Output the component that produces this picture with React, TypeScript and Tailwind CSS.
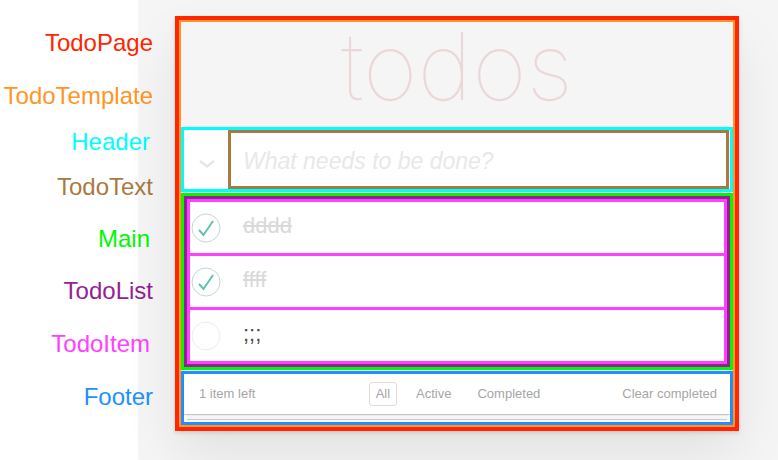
import React from "react";

const labels = [
  { text: "TodoPage", cls: "mt-[30px] text-[#ff2600]" },
  { text: "TodoTemplate", cls: "mt-[27px] text-[#ff9526]" },
  { text: "Header", cls: "mt-[20px] pr-[3px] text-[#00fdff]" },
  { text: "TodoText", cls: "mt-[19px] text-[#aa7942]" },
  { text: "Main", cls: "mt-[26px] pr-[3px] text-[#00f900]" },
  { text: "TodoList", cls: "mt-[26px] text-[#942193]" },
  { text: "TodoItem", cls: "mt-[27px] pr-[3px] text-[#ff40ff]" },
  { text: "Footer", cls: "mt-[27px] text-[#1e90ff]" },
];

const todos = [
  { id: 1, text: "dddd", done: true },
  { id: 2, text: "ffff", done: true },
  { id: 3, text: ";;;", done: false },
];

function Check({ done }: { done: boolean }) {
  return (
    <svg width="30" height="30" viewBox="0 0 30 30" className="shrink-0">
      <circle cx="15" cy="15" r="14" fill="none" stroke={done ? "#bddad5" : "#ededed"} strokeWidth="1" />
      {done && (
        <path d="M8 17 L12.5 22 L22 8" fill="none" stroke="#5dc2af" strokeWidth="2" />
      )}
    </svg>
  );
}

function TodoItem({ text, done }: { text: string; done: boolean }) {
  return (
    <div className="box-content flex h-[51px] items-center bg-white pl-px">
      <Check done={done} />
      <span
        className={
          done
            ? "mb-[3px] ml-[22px] text-[22px] leading-[26px] text-[#d9d9d9] line-through"
            : "mb-[3px] ml-[22px] text-[22px] leading-[26px] text-[#4d4d4d]"
        }
      >
        {text}
      </span>
    </div>
  );
}

export default function App() {
  return (
    <div className="flex h-[460px] w-full bg-[#f5f5f5] font-['Liberation_Sans',Arial,sans-serif]">
      <div className="flex w-[153px] shrink-0 flex-col items-end bg-[linear-gradient(to_right,#fff_138px,transparent_138px)]">
        {labels.map((l) => (
          <div key={l.text} className={`h-[26px] text-[24px] leading-[26px] ${l.cls}`}>
            {l.text}
          </div>
        ))}
      </div>

      <div className="ml-[22px] mt-[16px] self-start">
        {/* TodoPage */}
        <div className="w-[564px] border-4 border-[#ff2600] bg-[#f5f5f5] shadow-[0_2px_4px_0_rgba(0,0,0,0.12),0_25px_50px_0_rgba(0,0,0,0.08)]">
          {/* TodoTemplate */}
          <div className="flex flex-col border-2 border-[#ff9526]">
            <h1 className="flex h-[105px] items-center justify-center pb-[18px] font-['Inter',sans-serif] text-[94px] font-thin leading-none text-[#ebd7d7]">
              todos
            </h1>

            {/* Header */}
            <div className="flex h-[65px] border-[3px] border-[#00fdff] bg-white">
              <div className="flex w-[44px] items-center justify-center pl-[2px] pt-[8px]">
                <svg width="18" height="10" viewBox="0 0 18 10">
                  <polyline points="2,2 9,7.5 16,2" fill="none" stroke="#e6e6e6" strokeWidth="2.5" />
                </svg>
              </div>
              <input
                readOnly
                placeholder="What needs to be done?"
                className="mr-px min-w-0 flex-1 border-[3px] border-[#aa7942] bg-white pl-[12px] pt-[4px] text-[23px] italic outline-none placeholder:font-light placeholder:text-[#e8e8e8]"
              />
            </div>

            {/* Main */}
            <div className="mt-px border-[3px] border-[#00f900] bg-white">
              {/* TodoList */}
              <div className="border-[3px] border-[#942193]">
                <div className="divide-y-[3px] divide-[#ff40ff] border-[3px] border-[#ff40ff]">
                  {todos.map((t) => (
                    <TodoItem key={t.id} text={t.text} done={t.done} />
                  ))}
                </div>
              </div>
            </div>

            {/* Footer */}
            <div className="mt-px border-[3px] border-[#1e90ff] bg-white pb-[8px]">
              <div className="grid h-[40px] grid-cols-[1fr_auto_1fr] items-center bg-white px-[15px] pr-[13px] text-[13px] leading-[16px] text-[#a6a6a6] shadow-[0_1px_1px_rgba(0,0,0,0.2),0_8px_0_-3px_#f6f6f6,0_9px_1px_-3px_rgba(0,0,0,0.2)]">
                <span>1 item left</span>
                <div className="flex gap-[12px]">
                  <span className="rounded-[3px] border border-[#efd5d5] px-[6px] py-[3px]">All</span>
                  <span className="rounded-[3px] border border-transparent px-[6px] py-[3px]">Active</span>
                  <span className="rounded-[3px] border border-transparent px-[6px] py-[3px]">Completed</span>
                </div>
                <span className="text-right">Clear completed</span>
              </div>
            </div>
          </div>
        </div>
      </div>
    </div>
  );
}
